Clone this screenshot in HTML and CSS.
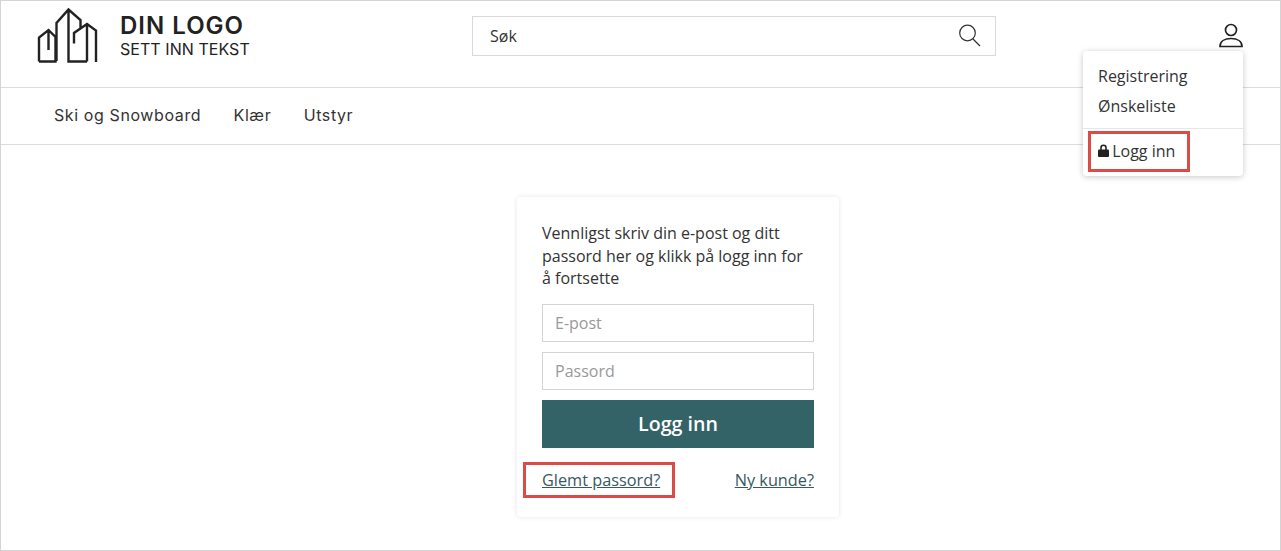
FILE: index.html
```html
<!DOCTYPE html>
<html>
<head>
  <title>Logg inn</title>
  <link rel="stylesheet" href="styles.css">
</head>
<body>
  <div class="page">
    <header class="top">
      <a class="logo" href="#">
        <svg class="logo-icon" width="62" height="56" viewBox="36 7 62 56">
          <path d="M39 61.5V37.5L48.5 30L55.5 37V61.5H39M48.5 30V50M56.5 61V23L68.5 9.5L80.5 20V28M68.5 9.5V61.5H87M74 43.5V33L87 24L96 30.5V62M87 24V61.5"/>
        </svg>
        <span class="logo-text">
          <strong>DIN LOGO</strong>
          <span>SETT INN TEKST</span>
        </span>
      </a>
      <form class="search">
        <span>Søk</span>
        <svg width="24" height="24" viewBox="0 0 24 24">
          <circle cx="11.5" cy="9" r="7.8"/>
          <path d="M17 15L24 22"/>
        </svg>
      </form>
      <a class="user" href="#">
        <svg width="26" height="26" viewBox="0 0 26 26">
          <circle cx="13" cy="8" r="5.5"/>
          <path d="M2 24.5C2 19.5 6.5 16.5 13 16.5S24 19.5 24 24.5Z"/>
        </svg>
      </a>
      <div class="menu">
        <a href="#">Registrering</a>
        <a href="#">Ønskeliste</a>
        <div class="menu-line"></div>
        <a class="menu-login" href="#">
          <svg width="11" height="13" viewBox="0 0 11 13">
            <path d="M3 6V3.8a2.5 2.5 0 0 1 5 0V6" class="shackle"/>
            <rect x="0" y="5.5" width="11" height="7.5" rx="1"/>
          </svg>
          Logg inn
        </a>
      </div>
    </header>

    <nav class="nav">
      <a href="#">Ski og Snowboard</a>
      <a href="#">Klær</a>
      <a href="#">Utstyr</a>
    </nav>

    <main class="content">
      <form class="card">
        <p>Vennligst skriv din e-post og ditt passord her og klikk på logg inn for å fortsette</p>
        <input type="text" placeholder="E-post">
        <input type="password" placeholder="Passord">
        <button type="button">Logg inn</button>
        <div class="links">
          <a class="marked" href="#">Glemt passord?</a>
          <a href="#">Ny kunde?</a>
        </div>
      </form>
    </main>
  </div>
</body>
</html>
```

FILE: styles.css
```css
*, *::after {
  box-sizing: border-box;
}

html, body {
  margin: 0;
  height: 100%;
  overflow: hidden;
}

body {
  font-family: "Open Sans", sans-serif;
  font-size: 16px;
  color: #333;
  background-color: #fff;
}

a {
  color: inherit;
  text-decoration: none;
}

.page {
  height: 551px;
  border: 1px solid #d4d4d4;
  display: flex;
  flex-direction: column;
}

/* header */
.top {
  position: relative;
  height: 86px;
  flex: none;
  padding: 0 36px 0 35px;
  display: flex;
  align-items: flex-start;
}

.logo {
  display: flex;
  width: 436px;
  flex: none;
  color: #222;
  padding-top: 6px;
}

.logo-icon {
  fill: none;
  stroke: #222;
  stroke-width: 2.4;
  flex: none;
}

.logo-text {
  display: flex;
  flex-direction: column;
  margin-left: 22px;
  padding-top: 6px;
  font-family: Inter, sans-serif;
}

.logo-text strong {
  font-size: 24px;
  font-weight: 600;
  line-height: 26px;
  letter-spacing: 1px;
}

.logo-text span {
  font-size: 16px;
  line-height: 21px;
  letter-spacing: 0.05px;
}

.search {
  width: 524px;
  height: 40px;
  margin-top: 15px;
  padding: 0 15px 0 17px;
  border: 1px solid #d9d9d9;
  display: flex;
  align-items: center;
  justify-content: space-between;
}

.search svg {
  fill: none;
  stroke: #333;
  stroke-width: 1.2;
  overflow: visible;
}

.user {
  margin: 21px 0 0 auto;
}

.user svg {
  display: block;
  fill: none;
  stroke: #222;
  stroke-width: 1.7;
}

.menu {
  position: absolute;
  top: 50px;
  left: 1082px;
  width: 160px;
  height: 125px;
  padding-top: 10px;
  background-color: #fff;
  border-radius: 4px;
  box-shadow: 0 1px 6px rgba(0, 0, 0, 0.22);
}

.menu a {
  display: block;
  height: 30px;
  line-height: 30px;
  padding-left: 15px;
}

.menu-line {
  height: 1px;
  margin-top: 7px;
  background-color: #e6e6e6;
}

.menu a.menu-login {
  position: relative;
  margin-top: 7px;
}

.menu-login svg {
  fill: #222;
  margin-right: -1px;
}

.menu-login .shackle {
  fill: none;
  stroke: #222;
  stroke-width: 1.6;
}

/* the red marks lie over the content */
.menu-login::after {
  content: "";
  position: absolute;
  top: -5px;
  left: 5px;
  width: 102px;
  height: 41px;
  border: 3px solid #dc4c46;
}

/* nav */
.nav {
  height: 58px;
  flex: none;
  padding: 0 53px 2px;
  border-top: 1px solid #dcdcdc;
  border-bottom: 1px solid #dcdcdc;
  display: flex;
  align-items: center;
  gap: 32.4px;
  font-family: Inter, sans-serif;
  font-size: 16px;
  letter-spacing: 0.6px;
}

/* login */
.content {
  flex: 1;
  display: flex;
  justify-content: center;
  padding-top: 52px;
  padding-left: 75px;
}

.card {
  width: 322px;
  height: 320px;
  padding: 25px 25px 0 25px;
  border-radius: 4px;
  box-shadow: 0 0 5px rgba(0, 0, 0, 0.1);
}

.card p {
  margin: 0 0 14px;
  line-height: 22.5px;
}

.card input {
  display: block;
  width: 272px;
  height: 38px;
  margin-bottom: 10px;
  padding: 0 12px;
  border: 1px solid #d4d4d4;
  border-radius: 0;
  outline: none;
  font-family: inherit;
  font-size: 16px;
}

.card input::placeholder {
  color: #999;
}

.card button {
  display: block;
  width: 272px;
  height: 48px;
  border: none;
  background-color: #336267;
  color: #fff;
  font-family: inherit;
  font-size: 19.6px;
  font-weight: 600;
}

.links {
  display: flex;
  justify-content: space-between;
  margin-top: 21px;
  font-size: 16.3px;
  line-height: 22px;
  color: #37595f;
}

.links a {
  text-decoration: underline;
}

.marked {
  position: relative;
}

.marked::after {
  content: "";
  position: absolute;
  top: -7px;
  left: -19px;
  width: 152px;
  height: 36px;
  border: 3px solid #dc4c46;
}
```
